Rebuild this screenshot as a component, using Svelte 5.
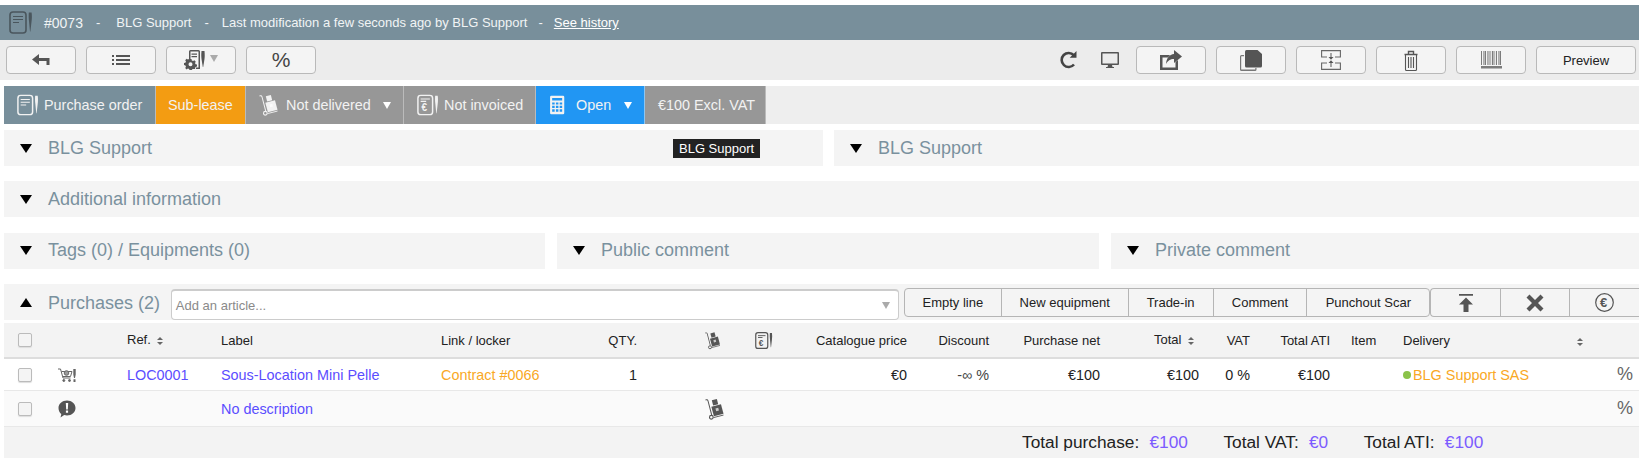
<script>
  const tabs = [
    { label: 'Purchase order', cls: 'slate', width: 152, icon: 'doc' },
    { label: 'Sub-lease', cls: 'orange', width: 90 },
    { label: 'Not delivered', cls: 'grey', width: 158, icon: 'truck', caret: true },
    { label: 'Not invoiced', cls: 'grey', width: 132, icon: 'invoice' },
    { label: 'Open', cls: 'blue', width: 109, icon: 'calc', caret: true },
    { label: '€100 Excl. VAT', cls: 'grey', width: 121 }
  ];
  const addButtons = [
    { label: 'Empty line', width: 97 },
    { label: 'New equipment', width: 127 },
    { label: 'Trade-in', width: 85 },
    { label: 'Comment', width: 94 },
    { label: 'Punchout Scar', width: 122 }
  ];
  const widths = [46, 77, 94, 220, 119, 77, 103, 60, 107, 82, 111, 99, 51, 80, 73, 187, 49];
</script>

{#snippet doc()}
  <svg class="ic" viewBox="0 0 24 24" fill="none" stroke="currentColor" stroke-width="1.600">
    <rect x="1" y="1.500" width="16" height="21" rx="3" />
    <path d="M4 6h10M4 9h10M4 12h6" stroke-width="1.200" />
    <path d="M19.800 2h2.800c.4 3 .4 6 0 8.500L21.400 21h-.4l-1-10.500c-.4-2.500-.4-5.500-.2-8.500z" fill="currentColor" stroke="none" />
  </svg>
{/snippet}

{#snippet invoice()}
  <svg class="ic" viewBox="0 0 24 24" fill="none" stroke="currentColor" stroke-width="1.600">
    <rect x="1" y="1.500" width="16" height="21" rx="3" />
    <path d="M4 5.500h10M4 8h6" stroke-width="1.200" />
    <text x="5" y="19" font-size="11" font-weight="700" font-family="Liberation Sans" fill="currentColor" stroke="none">€</text>
    <path d="M19.800 2h2.800c.4 3 .4 6 0 8.500L21.400 21h-.4l-1-10.500c-.4-2.500-.4-5.500-.2-8.500z" fill="currentColor" stroke="none" />
  </svg>
{/snippet}

{#snippet truck()}
  <svg class="ic" viewBox="0 0 24 24" fill="currentColor">
    <path d="M1.500 1.500c1.800-.6 2.800-.2 3.300 1.200L9 18.500l-1.100.3L3.800 3c-.3-.7-.8-.8-2-.4z" />
    <circle cx="8" cy="21" r="2" fill="none" stroke="currentColor" stroke-width="1.200" />
    <path d="M8.500 2.500l5.500-1.400 1.500 5.700L10 8.200z" />
    <path d="M8 9.500l10.500-2.700 2.800 10.500-10.500 2.700z" />
    <path d="M12.500 11.500l3-.8.800 3-3 .8z" fill="#fff" opacity=".7" />
    <path d="M10.300 21.400l11-2.800" stroke="currentColor" stroke-width="1" />
  </svg>
{/snippet}

{#snippet calc()}
  <svg class="ic" viewBox="0 0 24 24" fill="currentColor">
    <path fill-rule="evenodd" d="M4 1h14a1.500 1.500 0 0 1 1.500 1.500v19A1.500 1.500 0 0 1 18 23H4a1.500 1.500 0 0 1-1.500-1.500v-19A1.500 1.500 0 0 1 4 1zm1 2.500v3h12v-3zM5 9v2.500h3V9zm4.500 0v2.500h3V9zM14 9v2.500h3V9zM5 13v2.500h3V13zm4.500 0v2.500h3V13zm4.500 0v2.500h3V13zM5 17v3h3v-3zm4.500 0v3h3v-3zm4.500 0v3h3v-3z" />
  </svg>
{/snippet}

{#snippet sorter()}
  <span class="sorter"><i class="up"></i><i class="down"></i></span>
{/snippet}

<div class="page">
  <header class="topbar">
    <span class="top-icon">{@render doc()}</span>
    <span class="num">#0073</span>
    <span class="dash first">-</span>
    <span>BLG Support</span>
    <span class="dash">-</span>
    <span>Last modification a few seconds ago by BLG Support</span>
    <span class="dash last">-</span>
    <a href="#history">See history</a>
  </header>

  <div class="toolbar">
    <div class="tools">
      <button class="tool" aria-label="Back">
        <svg width="18" height="14" viewBox="0 0 18 14" fill="#555"><path d="M7 1v4h10.500v7h-3V8H7v4L0 6.500z" /></svg>
      </button>
      <button class="tool" aria-label="List">
        <svg width="18" height="12" viewBox="0 0 18 12" fill="#555"><path d="M0 1h2v2H0zM4 1h14v2H4zM0 5h2v2H0zM4 5h14v2H4zM0 9h2v2H0zM4 9h14v2H4z" /></svg>
      </button>
      <button class="tool tool-gear" aria-label="Options">
        <svg width="22" height="20" viewBox="0 0 22 20" fill="#555">
          <path d="M5 1.500a1.500 1.500 0 0 1 1.500-1.500h8A1.500 1.500 0 0 1 16 1.500V19h-1.500V1.500h-8V9H5zM7.500 3.500h5.500v1.300H7.500zM7.500 6h5.500v1.300H7.500zM12 17.500h3V19h-3z" />
          <path d="M17.500 1h3c.3 3 .3 5.500 0 8L19.200 17h-.4L17.500 9c-.3-2.500-.3-5 0-8z" />
          <path fill-rule="evenodd" d="M5.500 9h2l.3 1.500 1.300.6 1.300-.8 1.400 1.400-.8 1.300.6 1.300 1.400.3v2l-1.400.3-.6 1.300.2.800H9l-.8.3-.7 1.300h-2l-.3-1.500-1.300-.5-1.300.8L1.200 18l.8-1.300-.6-1.300L0 15.100v-2l1.400-.3.600-1.300-.8-1.300 1.400-1.400 1.300.8 1.300-.6zm1 3.200a2 2 0 1 0 0 4 2 2 0 0 0 0-4z" />
        </svg>
        <i class="mini-caret"></i>
      </button>
      <button class="tool tool-pct">%</button>
    </div>

    <div class="tools">
      <span class="bare bare-reload">
        <svg width="20" height="20" viewBox="0 0 20 20" fill="none" stroke="#444" stroke-width="2.600">
          <path d="M15 14.500a7 7 0 1 1-.2-9.300" />
          <path d="M17.500 1v6.800h-6.800z" fill="#444" stroke="none" />
        </svg>
      </span>
      <span class="bare bare-screen">
        <svg width="18" height="18" viewBox="0 0 18 18" fill="#555">
          <path fill-rule="evenodd" d="M1 1h16a1 1 0 0 1 1 1v11a1 1 0 0 1-1 1H1a1 1 0 0 1-1-1V2a1 1 0 0 1 1-1zm.500 1.500v10h15v-10z" />
          <path d="M7 14h4l.5 2h1.500v1H5v-1h1.500z" />
        </svg>
      </span>
      <button class="tool" aria-label="Share">
        <svg width="22" height="20" viewBox="0 0 22 20" fill="#555">
          <path d="M0 5h10l-2 2.500H2.500v10h13V12l2.500-2v10H0z" />
          <path d="M14 0l8 6.500-8 6.500V9c-4 0-6 1.500-8 5 .5-6 3.500-9.500 8-10z" />
        </svg>
      </button>
      <button class="tool" aria-label="Copy">
        <svg width="22" height="21" viewBox="0 0 22 21" fill="#555">
          <path d="M0 6.500A1.500 1.500 0 0 1 1.500 5H4v1.200H1.500a.3.300 0 0 0-.3.300v12.800c0 .2.100.3.300.3H15a.3.300 0 0 0 .3-.3V18h1.200v1.500A1.500 1.500 0 0 1 15 21H1.500A1.500 1.500 0 0 1 0 19.500z" fill="#777" />
          <path d="M5 1.500A1.500 1.500 0 0 1 6.500 0h11L22 4v12a1.500 1.500 0 0 1-1.500 1.500h-14A1.500 1.500 0 0 1 5 16z" />
        </svg>
      </button>
      <button class="tool" aria-label="Split">
        <svg width="20" height="20" viewBox="0 0 20 20" fill="none" stroke="#666" stroke-width="1.100">
          <path d="M6 7H.6V.6h18.800V7H14M6 13H.6v6.400h18.800V13H14" />
          <path d="M10 3v5M10 17v-5" />
          <path d="M7.500 7h5L10 9.800zM7.500 13h5L10 10.200z" fill="#555" stroke="none" />
        </svg>
      </button>
      <button class="tool" aria-label="Delete">
        <svg width="14" height="21" viewBox="0 0 14 21" fill="none" stroke="#555" stroke-width="1.100">
          <path d="M.5 4.500h13M4.500 4.500V1.500h5v3" stroke-width="1.400" />
          <path d="M1.500 5v14.500a1 1 0 0 0 1 1h9a1 1 0 0 0 1-1V5" />
          <path d="M4.500 7v11M7 7v11M9.500 7v11" />
        </svg>
      </button>
      <button class="tool" aria-label="Barcode">
        <svg width="21" height="18" viewBox="0 0 21 18" fill="#666">
          <path d="M0 0h1v14H0zM2 0h.6v14H2zM3.500 0h1.500v14H3.500zM6 0h.6v14H6zM7.500 0h1v14h-1zM9.500 0h.6v14h-.6zM11 0h1.500v14H11zM13.500 0h.6v14h-.6zM15 0h1v14h-1zM17 0h.6v14H17zM18.500 0h1.500v14h-1.500zM0 15h21v2.500H0z" opacity=".85" />
        </svg>
      </button>
      <button class="tool tool-preview">Preview</button>
    </div>
  </div>

  <nav class="tabs">
    {#each tabs as tab}
      <div class="tab {tab.cls}" style="width: {tab.width}px">
        {#if tab.icon === 'doc'}{@render doc()}{/if}
        {#if tab.icon === 'truck'}{@render truck()}{/if}
        {#if tab.icon === 'invoice'}{@render invoice()}{/if}
        {#if tab.icon === 'calc'}{@render calc()}{/if}
        <span>{tab.label}</span>
        {#if tab.caret}<i class="tab-caret"></i>{/if}
      </div>
    {/each}
  </nav>

  <div class="grid halves">
    <section class="panel"><i class="tri"></i><h2>BLG Support</h2><span class="tooltip">BLG Support</span></section>
    <section class="panel"><i class="tri"></i><h2>BLG Support</h2></section>
  </div>
  <section class="panel single"><i class="tri"></i><h2>Additional information</h2></section>
  <div class="grid thirds">
    <section class="panel"><i class="tri"></i><h2>Tags (0) / Equipments (0)</h2></section>
    <section class="panel"><i class="tri"></i><h2>Public comment</h2></section>
    <section class="panel"><i class="tri"></i><h2>Private comment</h2></section>
  </div>

  <section class="purchases">
    <div class="purchases-head">
      <i class="tri open"></i>
      <h2>Purchases (2)</h2>
      <div class="article">
        <span>Add an article...</span>
        <i class="article-caret"></i>
      </div>
      <div class="group">
        {#each addButtons as b}
          <button style="width: {b.width}px">{b.label}</button>
        {/each}
      </div>
      <div class="group icons">
        <button aria-label="Top">
          <svg width="14" height="18" viewBox="0 0 14 18" fill="#555"><path d="M0 0h14v1.800H0zM7 3.500l7 7H9.500V18h-5v-7.500H0z" /></svg>
        </button>
        <button aria-label="Remove">
          <svg width="18" height="18" viewBox="0 0 18 18" fill="#555"><path d="M3.500 0.500L9 6l5.500-5.500 3 3L12 9l5.500 5.500-3 3L9 12l-5.500 5.500-3-3L6 9 .5 3.500z" /></svg>
        </button>
        <button aria-label="Currency">
          <svg width="19" height="19" viewBox="0 0 19 19" fill="none" stroke="#555" stroke-width="1.200">
            <circle cx="9.500" cy="9.500" r="8.800" />
            <text x="5" y="14" font-size="13" font-weight="700" font-family="Liberation Sans" fill="#555" stroke="none">€</text>
          </svg>
        </button>
      </div>
    </div>

    <table>
      <colgroup>
        {#each widths as w}<col style="width: {w}px" />{/each}
      </colgroup>
      <thead>
        <tr>
          <th class="check"><input type="checkbox" /></th>
          <th></th>
          <th class="left"><span class="raised">Ref.</span> {@render sorter()}</th>
          <th class="left">Label</th>
          <th class="left">Link / locker</th>
          <th class="right">QTY.</th>
          <th class="truck-col"><span class="small-ic">{@render truck()}</span></th>
          <th class="inv-col"><span class="small-ic">{@render invoice()}</span></th>
          <th class="right">Catalogue price</th>
          <th class="right">Discount</th>
          <th class="right">Purchase net</th>
          <th class="right total-col"><span class="raised">Total</span> {@render sorter()}</th>
          <th class="right">VAT</th>
          <th class="right">Total ATI</th>
          <th class="left item">Item</th>
          <th class="left delivery">Delivery<span class="delivery-sort">{@render sorter()}</span></th>
          <th></th>
        </tr>
      </thead>
      <tbody>
        <tr>
          <td class="check"><input type="checkbox" /></td>
          <td class="state">
            <svg width="18" height="14" viewBox="0 0 18 14" fill="none" stroke="#666" stroke-width="1">
              <path d="M0 1h2.500l2.500 9h7.500" />
              <path d="M3.500 3.500H14l-1.500 5H5" />
              <circle cx="8.500" cy="5" r="2.300" fill="#999" stroke="#666" />
              <circle cx="5.800" cy="12.500" r="1" fill="#666" />
              <circle cx="11.500" cy="12.500" r="1" fill="#666" />
              <path d="M15.300 1h2.400v5.500l-.7 3.500h-1l-.7-3.500zM15.500 11.300h2V14h-2z" fill="#666" stroke="none" />
            </svg>
          </td>
          <td class="left"><a class="link" href="#ref">LOC0001</a></td>
          <td class="left"><a class="link" href="#label">Sous-Location Mini Pelle</a></td>
          <td class="left"><a class="warm" href="#contract">Contract #0066</a></td>
          <td class="right qty">1</td>
          <td></td>
          <td></td>
          <td class="right">€0</td>
          <td class="right dim">-∞ %</td>
          <td class="right">€100</td>
          <td class="right total-val">€100</td>
          <td class="right">0 %</td>
          <td class="right">€100</td>
          <td></td>
          <td class="left"><span class="dot"></span><a class="warm" href="#supplier">BLG Support SAS</a></td>
          <td class="right pct">%</td>
        </tr>
        <tr class="alt">
          <td class="check"><input type="checkbox" /></td>
          <td class="state">
            <svg width="18" height="18" viewBox="0 0 18 18">
              <path d="M9 .5c4.800 0 8.500 3.400 8.500 7.500s-3.700 7.500-8.500 7.500c-1 0-2-.1-2.800-.4L2.500 17.500l.8-3.400C1.600 12.700.5 10.500.5 8 .5 3.900 4.200.5 9 .5z" fill="#555" />
              <path d="M7.800 3h2.400l-.4 6.500H8.200zM7.900 10.600h2.200v2.200H7.900z" fill="#fff" />
            </svg>
          </td>
          <td></td>
          <td class="left"><a class="link" href="#nodesc">No description</a></td>
          <td></td>
          <td></td>
          <td class="truck-col big"><span class="big-ic">{@render truck()}</span></td>
          <td></td><td></td><td></td><td></td><td></td><td></td><td></td><td></td><td></td>
          <td class="right pct">%</td>
        </tr>
      </tbody>
    </table>

    <footer class="totals">
      <span class="total-item">Total purchase: <b>€100</b></span>
      <span class="total-item">Total VAT: <b>€0</b></span>
      <span class="total-item">Total ATI: <b>€100</b></span>
    </footer>
  </section>
</div>

<style>
  :global(body) {
    margin: 0;
    background: #fff;
  }

  .page {
    font-family: 'Liberation Sans', Arial, sans-serif;
    font-size: 14px;
    color: #222;
    padding-top: 5px;
  }

  .ic {
    width: 22px;
    height: 22px;
    flex: none;
  }

  .topbar {
    height: 35px;
    background: #788f9b;
    color: #f1f4f5;
    display: flex;
    align-items: center;
    font-size: 13px;
    padding-left: 9px;
  }

  .num {
    font-size: 14px;
  }

  .top-icon {
    color: #4a565d;
    display: flex;
    margin-right: 11px;
  }

  .top-icon .ic {
    width: 24px;
    height: 25px;
  }

  .dash {
    margin: 0 13px;
  }

  .dash.first {
    margin-right: 16px;
  }

  .dash.last {
    margin: 0 11px;
  }

  .topbar a {
    color: #fff;
  }

  .toolbar {
    height: 40px;
    background: #ececec;
    display: flex;
    justify-content: space-between;
    align-items: center;
    padding: 0 3px 0 6px;
    margin-bottom: 6px;
  }

  .tools {
    display: flex;
    align-items: center;
    gap: 10px;
  }

  .tool {
    width: 70px;
    height: 28px;
    padding: 0;
    background: #f4f4f4;
    border: 1px solid #b9b9b9;
    border-radius: 4px;
    display: flex;
    align-items: center;
    justify-content: center;
    font-family: inherit;
    color: #222;
  }

  .tool-gear {
    gap: 4px;
  }

  .mini-caret {
    width: 0;
    height: 0;
    border-left: 4px solid transparent;
    border-right: 4px solid transparent;
    border-top: 7px solid #aaa;
    margin-bottom: 3px;
  }

  .tool-pct {
    font-size: 21px;
    color: #444;
  }

  .tool-preview {
    width: 100px;
    font-size: 13px;
  }

  .bare {
    display: flex;
  }

  .bare-reload {
    margin-right: 12px;
  }

  .bare-screen {
    margin-right: 7px;
  }

  .tabs {
    height: 38px;
    background: #eee;
    margin-left: 4px;
    display: flex;
    font-size: 14.400px;
  }

  .tab {
    box-sizing: border-box;
    height: 100%;
    display: flex;
    align-items: center;
    padding-left: 13px;
    color: #f2f2f2;
    border-right: 1px solid #bbb;
    position: relative;
    white-space: nowrap;
  }

  .tab .ic {
    margin-right: 5px;
    margin-left: 0;
    width: 22px;
    height: 22px;
  }

  .slate { background: #788f9b; }
  .orange { background: #f39c12; padding-left: 12px; }
  .grey { background: #979797; }
  .blue { background: #2196f3; padding-left: 11px; border-right-color: #8cc6f3; }
  .blue .ic { margin-right: 7px; height: 20px; }
  .grey:nth-child(3) { padding-left: 12px; }
  .grey:nth-child(3) .ic { margin-right: 6px; }

  .tab-caret {
    position: absolute;
    right: 12px;
    top: 16px;
    width: 0;
    height: 0;
    border-left: 4px solid transparent;
    border-right: 4px solid transparent;
    border-top: 7px solid #fff;
  }

  .grid {
    display: grid;
    margin: 6px 0 0 4px;
  }

  .halves {
    grid-template-columns: 819px 1fr;
    column-gap: 11px;
  }

  .thirds {
    grid-template-columns: 541px 542px 1fr;
    column-gap: 12px;
    margin-top: 16px;
  }

  .thirds .panel {
    box-sizing: border-box;
    padding-bottom: 2px;
  }

  .panel {
    height: 36px;
    background: #f4f4f4;
    display: flex;
    align-items: center;
    padding-left: 16px;
    position: relative;
  }

  .single {
    margin: 15px 0 0 4px;
  }

  .tri {
    width: 0;
    height: 0;
    border-left: 6px solid transparent;
    border-right: 6px solid transparent;
    border-top: 9px solid #000;
    margin-right: 16px;
  }

  .tri.open {
    border-top: 0;
    border-bottom: 9px solid #000;
  }

  h2 {
    margin: 0;
    font-size: 18px;
    font-weight: 400;
    color: #7a919e;
    white-space: nowrap;
  }

  .tooltip {
    position: absolute;
    left: 669px;
    top: 9px;
    height: 19px;
    line-height: 19px;
    padding: 0 6px;
    background: #222;
    color: #fff;
    font-size: 13px;
  }

  .purchases {
    margin: 15px 0 5px 4px;
  }

  .purchases-head {
    height: 36px;
    background: #f4f4f4;
    padding-left: 16px;
    display: flex;
    align-items: flex-start;
    margin-bottom: 3px;
  }

  .purchases-head .tri {
    margin-top: 14px;
  }

  .purchases-head h2 {
    margin-top: 9px;
    width: 123px;
  }

  .article {
    box-sizing: border-box;
    width: 729px;
    height: 31px;
    margin-top: 5px;
    background: #fff;
    border: 1px solid #ccc;
    border-top-width: 2px;
    border-radius: 4px;
    display: flex;
    align-items: center;
    justify-content: space-between;
    padding: 0 8px 0 4px;
    color: #8a8a8a;
    font-size: 13px;
  }

  .article-caret {
    width: 0;
    height: 0;
    border-left: 4px solid transparent;
    border-right: 4px solid transparent;
    border-top: 7px solid #aaa;
  }

  .group {
    display: flex;
    margin: 4px 0 0 5px;
    border: 1px solid #b5b5b5;
    border-radius: 4px;
    height: 29px;
    box-sizing: border-box;
    background: #f4f4f4;
    overflow: hidden;
  }

  .group button {
    box-sizing: border-box;
    height: 100%;
    border: 0;
    border-right: 1px solid #b5b5b5;
    background: none;
    padding: 0;
    font-family: inherit;
    font-size: 13px;
    color: #222;
    display: flex;
    align-items: center;
    justify-content: center;
  }

  .group button:last-child {
    border-right: 0;
  }

  .group.icons {
    margin-left: 0;
    border-radius: 4px 0 0 4px;
    border-right: 0;
    width: 209px;
  }

  .group.icons button {
    flex: 1;
  }

  table {
    border-collapse: collapse;
    table-layout: fixed;
    width: 1635px;
    font-size: 14.400px;
  }

  th {
    height: 34px;
    background: #f3f3f3;
    border-bottom: 2px solid #ddd;
    font-size: 13px;
    font-weight: 400;
    padding: 0;
    white-space: nowrap;
  }

  td {
    height: 31px;
    padding: 0;
    border-bottom: 1px solid #e8e8e8;
    white-space: nowrap;
  }

  .alt td {
    height: 35px;
    background: #fafafa;
  }

  .left { text-align: left; }
  .right { text-align: right; }

  .check {
    text-align: left;
    padding-left: 14px;
  }

  input[type='checkbox'] {
    appearance: none;
    box-sizing: border-box;
    width: 14px;
    height: 14px;
    margin: 0;
    display: block;
    background: #f4f4f4;
    border: 1px solid #bbb;
    border-radius: 2px;
    box-shadow: 0 1px 1px #ddd;
  }

  .state {
    padding-left: 8px;
  }

  .state svg {
    display: block;
  }

  .raised {
    position: relative;
    top: -1px;
  }

  .sorter {
    display: inline-flex;
    flex-direction: column;
    gap: 2px;
    margin-left: 3px;
    vertical-align: middle;
  }

  .sorter i {
    width: 0;
    height: 0;
    border-left: 3px solid transparent;
    border-right: 3px solid transparent;
  }

  .sorter .up { border-bottom: 3px solid #666; }
  .sorter .down { border-top: 3px solid #666; }

  .small-ic, .big-ic {
    color: #555;
    display: block;
  }

  .small-ic .ic {
    display: block;
    width: 18px;
    height: 19px;
  }

  .big-ic .ic {
    display: block;
    width: 22px;
    height: 24px;
  }

  .truck-col {
    padding-left: 67px;
    text-align: left;
  }

  .truck-col.big {
    padding-left: 67px;
  }

  .inv-col {
    padding-left: 15px;
    text-align: left;
  }

  .total-col {
    padding-right: 5px;
  }

  .item {
    padding-left: 21px;
  }

  .delivery {
    position: relative;
  }

  .delivery-sort {
    position: absolute;
    left: 174px;
    top: 10px;
  }

  .delivery-sort :global(.sorter) {
    margin: 0;
  }

  .link {
    color: #5b4dff;
    text-decoration: none;
  }

  .warm {
    color: #f9a825;
    text-decoration: none;
  }

  .dim {
    color: #444;
  }

  .dot {
    display: inline-block;
    width: 8px;
    height: 8px;
    border-radius: 50%;
    background: #8bc34a;
    margin-right: 2px;
    vertical-align: 1px;
  }

  .pct {
    font-size: 18px;
    color: #666;
    padding-right: 6px;
  }

  .totals {
    height: 31px;
    background: #f3f3f3;
    display: flex;
    align-items: center;
    padding-left: 1018px;
    font-size: 17.300px;
    color: #222;
  }

  .total-item {
    margin-right: 35.500px;
    white-space: nowrap;
  }

  .total-item b {
    font-weight: 400;
    color: #7c5cff;
    margin-left: 5.500px;
  }
</style>
